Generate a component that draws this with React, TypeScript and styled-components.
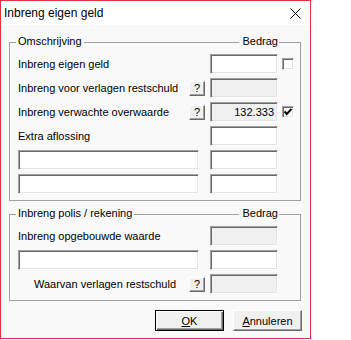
import React from "react";
import styled, { createGlobalStyle } from "styled-components";

const Global = createGlobalStyle`
  html, body { margin: 0; padding: 0; background: #ffffff; }
  body { font-family: "Liberation Sans", Arial, sans-serif; font-size: 11px; color: #000; }
`;

const Window = styled.div`
  width: 311px;
  height: 339px;
  box-sizing: border-box;
  border: 1px solid #e5323e;
  background: #f9f9f9;
  display: flex;
  flex-direction: column;
`;

const TitleBar = styled.div`
  height: 24px;
  flex: none;
  background: #ffffff;
  display: flex;
  align-items: center;
  justify-content: space-between;
  padding: 0 9px 0 3px;
  font-size: 12px;
  line-height: 24px;
`;

const Body = styled.div`
  padding: 17px 0 0 8px;
  display: flex;
  flex-direction: column;
`;

const Group = styled.div<{ $gapTop?: number }>`
  position: relative;
  width: 292px;
  box-sizing: border-box;
  border: 1px solid #a0a0a0;
  padding: 11px 6px 6px 8px;
  margin-top: ${(p) => p.$gapTop ?? 0}px;
  display: flex;
  flex-direction: column;
  gap: 4px;
`;

const Legend = styled.span<{ $right?: boolean }>`
  position: absolute;
  top: -8px;
  ${(p) => (p.$right ? "right: 21px; padding: 0 1px 0 4px;" : "left: 6px; padding: 0 2px;")}
  line-height: 13px;
  background: #f9f9f9;
`;

const Row = styled.div<{ $indent?: number }>`
  height: 20px;
  display: flex;
  align-items: center;
  padding-left: ${(p) => p.$indent ?? 0}px;
`;

const Label = styled.span`
  flex: 1;
  line-height: 20px;
  white-space: nowrap;
`;

const Field = styled.div<{ $disabled?: boolean; $wide?: boolean }>`
  width: ${(p) => (p.$wide ? 181 : 68)}px;
  height: 20px;
  box-sizing: border-box;
  flex: none;
  margin-left: ${(p) => (p.$wide ? 0 : "auto")};
  border: 1px solid;
  border-color: #a0a0a0 #ffffff #ffffff #a0a0a0;
  box-shadow: inset 1px 1px 0 #696969, inset -1px -1px 0 #e3e3e3;
  background: ${(p) => (p.$disabled ? "#f0f0f0" : "#ffffff")};
  text-align: right;
  padding: 0 3px 0 2px;
  line-height: 18px;
`;

const HelpButton = styled.div`
  width: 16px;
  height: 15px;
  box-sizing: border-box;
  flex: none;
  margin-right: 5px;
  border: 1px solid;
  border-color: #ffffff #696969 #696969 #ffffff;
  box-shadow: inset -1px -1px 0 #a0a0a0;
  background: #f0f0f0;
  display: flex;
  align-items: center;
  justify-content: center;
  line-height: 13px;
  font-size: 11px;
`;

const CheckSlot = styled.div`
  width: 12px;
  height: 12px;
  margin-left: 4px;
  flex: none;
`;

const Check = styled.div`
  width: 12px;
  height: 12px;
  box-sizing: border-box;
  margin-left: 4px;
  flex: none;
  border: 1px solid;
  border-color: #a0a0a0 #ffffff #ffffff #a0a0a0;
  box-shadow: inset 1px 1px 0 #696969, inset -1px -1px 0 #e3e3e3;
  background: #ffffff;
  display: flex;
  align-items: center;
  justify-content: center;
`;

const ButtonRow = styled.div`
  width: 293px;
  margin-top: 9px;
  display: flex;
  justify-content: flex-end;
  gap: 9px;
`;

const Button = styled.div<{ $default?: boolean }>`
  width: 69px;
  height: 21px;
  box-sizing: border-box;
  background: #f0f0f0;
  display: flex;
  align-items: center;
  justify-content: center;
  border: 1px solid;
  ${(p) =>
    p.$default
      ? `border-color: #000000;
         box-shadow: inset 1px 1px 0 #ffffff, inset -1px -1px 0 #696969, inset -2px -2px 0 #a0a0a0;`
      : `border-color: #ffffff #696969 #696969 #ffffff;
         box-shadow: inset -1px -1px 0 #a0a0a0;`}
`;

const CloseIcon = () => (
  <svg width="11" height="11" viewBox="0 0 11 11">
    <path d="M0.5 0.5 L10.5 10.5 M10.5 0.5 L0.5 10.5" stroke="#000" strokeWidth="1" fill="none" />
  </svg>
);

const Tick = () => (
  <svg width="10" height="10" viewBox="0 0 10 10">
    <polyline points="1.5,4.5 3.8,7 8.5,1.8" stroke="#000" strokeWidth="2" fill="none" />
  </svg>
);

export default function App() {
  return (
    <>
      <Global />
      <Window>
        <TitleBar>
          <span>Inbreng eigen geld</span>
          <CloseIcon />
        </TitleBar>
        <Body>
          <Group>
            <Legend>Omschrijving</Legend>
            <Legend $right>Bedrag</Legend>
            <Row>
              <Label>Inbreng eigen geld</Label>
              <Field />
              <Check />
            </Row>
            <Row>
              <Label>Inbreng voor verlagen restschuld</Label>
              <HelpButton>?</HelpButton>
              <Field $disabled />
              <CheckSlot />
            </Row>
            <Row>
              <Label>Inbreng verwachte overwaarde</Label>
              <HelpButton>?</HelpButton>
              <Field $disabled>132.333</Field>
              <Check>
                <Tick />
              </Check>
            </Row>
            <Row>
              <Label>Extra aflossing</Label>
              <Field />
              <CheckSlot />
            </Row>
            <Row>
              <Field $wide />
              <Field />
              <CheckSlot />
            </Row>
            <Row>
              <Field $wide />
              <Field />
              <CheckSlot />
            </Row>
          </Group>
          <Group $gapTop={13}>
            <Legend>Inbreng polis / rekening</Legend>
            <Legend $right>Bedrag</Legend>
            <Row>
              <Label>Inbreng opgebouwde waarde</Label>
              <Field $disabled />
              <CheckSlot />
            </Row>
            <Row>
              <Field $wide />
              <Field />
              <CheckSlot />
            </Row>
            <Row $indent={16}>
              <Label>Waarvan verlagen restschuld</Label>
              <HelpButton>?</HelpButton>
              <Field $disabled />
              <CheckSlot />
            </Row>
          </Group>
          <ButtonRow>
            <Button $default>
              <span>
                <u>O</u>K
              </span>
            </Button>
            <Button>
              <span>
                <u>A</u>nnuleren
              </span>
            </Button>
          </ButtonRow>
        </Body>
      </Window>
    </>
  );
}
